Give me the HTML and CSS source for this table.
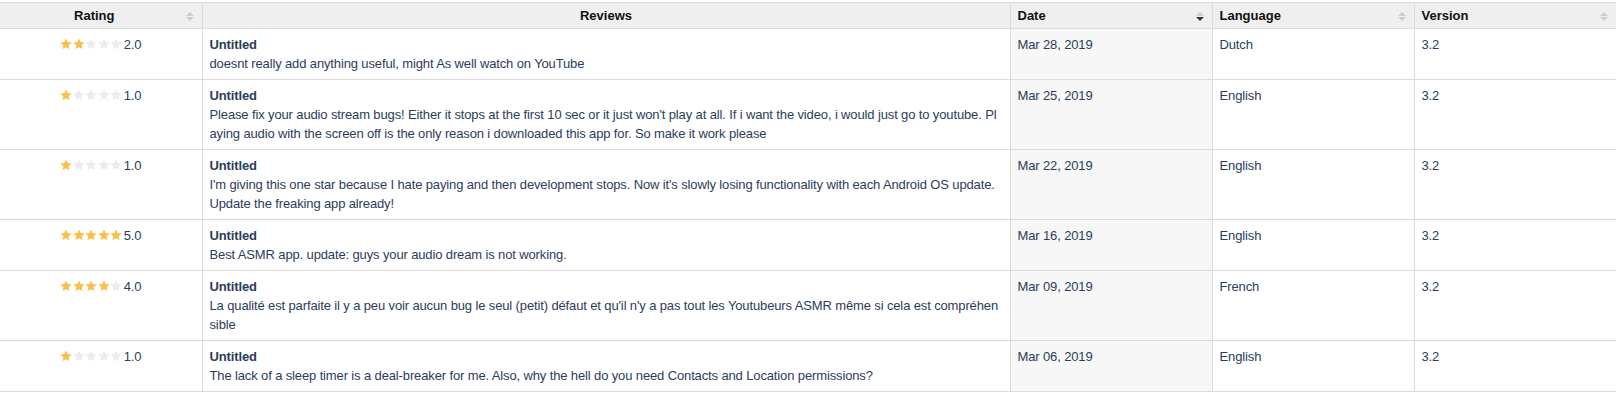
FILE: index.html
```html
<!DOCTYPE html>
<html>
<head>
<meta charset="utf-8">
<link rel="stylesheet" href="styles.css">
</head>
<body>
<svg width="0" height="0" class="defs">
  <defs>
    <path id="star" d="M6 0.4l1.7 3.6 3.9 0.5-2.9 2.7 0.75 3.9L6 9.2 2.55 11.1l0.75-3.9L0.4 4.5l3.9-0.5z"/>
  </defs>
</svg>
<table class="grid">
  <colgroup>
    <col class="c-rating"><col class="c-reviews"><col class="c-date"><col class="c-lang"><col class="c-ver">
  </colgroup>
  <thead>
    <tr>
      <th class="h-center h-sort">Rating<span class="sort"><i class="up"></i><i class="down"></i></span></th>
      <th class="h-center">Reviews</th>
      <th class="h-sort">Date<span class="sort"><i class="up"></i><i class="down on"></i></span></th>
      <th class="h-sort">Language<span class="sort"><i class="up"></i><i class="down"></i></span></th>
      <th class="h-sort">Version<span class="sort"><i class="up"></i><i class="down"></i></span></th>
    </tr>
  </thead>
  <tbody>
    <tr>
      <td class="rating"><span class="stars"><svg class="s on"><use href="#star"/></svg><svg class="s on"><use href="#star"/></svg><svg class="s"><use href="#star"/></svg><svg class="s"><use href="#star"/></svg><svg class="s"><use href="#star"/></svg></span>2.0</td>
      <td class="review"><div class="title">Untitled</div><div class="body">doesnt really add anything useful, might As well watch on YouTube</div></td>
      <td class="date">Mar 28, 2019</td>
      <td>Dutch</td>
      <td>3.2</td>
    </tr>
    <tr>
      <td class="rating"><span class="stars"><svg class="s on"><use href="#star"/></svg><svg class="s"><use href="#star"/></svg><svg class="s"><use href="#star"/></svg><svg class="s"><use href="#star"/></svg><svg class="s"><use href="#star"/></svg></span>1.0</td>
      <td class="review"><div class="title">Untitled</div><div class="body break">Please fix your audio stream bugs! Either it stops at the first 10 sec or it just won't play at all. If i want the video, i would just go to youtube. Playing audio with the screen off is the only reason i downloaded this app for. So make it work please</div></td>
      <td class="date">Mar 25, 2019</td>
      <td>English</td>
      <td>3.2</td>
    </tr>
    <tr>
      <td class="rating"><span class="stars"><svg class="s on"><use href="#star"/></svg><svg class="s"><use href="#star"/></svg><svg class="s"><use href="#star"/></svg><svg class="s"><use href="#star"/></svg><svg class="s"><use href="#star"/></svg></span>1.0</td>
      <td class="review"><div class="title">Untitled</div><div class="body">I'm giving this one star because I hate paying and then development stops. Now it's slowly losing functionality with each Android OS update. Update the freaking app already!</div></td>
      <td class="date">Mar 22, 2019</td>
      <td>English</td>
      <td>3.2</td>
    </tr>
    <tr>
      <td class="rating"><span class="stars"><svg class="s on"><use href="#star"/></svg><svg class="s on"><use href="#star"/></svg><svg class="s on"><use href="#star"/></svg><svg class="s on"><use href="#star"/></svg><svg class="s on"><use href="#star"/></svg></span>5.0</td>
      <td class="review"><div class="title">Untitled</div><div class="body">Best ASMR app. update: guys your audio dream is not working.</div></td>
      <td class="date">Mar 16, 2019</td>
      <td>English</td>
      <td>3.2</td>
    </tr>
    <tr>
      <td class="rating"><span class="stars"><svg class="s on"><use href="#star"/></svg><svg class="s on"><use href="#star"/></svg><svg class="s on"><use href="#star"/></svg><svg class="s on"><use href="#star"/></svg><svg class="s"><use href="#star"/></svg></span>4.0</td>
      <td class="review"><div class="title">Untitled</div><div class="body break">La qualité est parfaite il y a peu voir aucun bug le seul (petit) défaut et qu'il n'y a pas tout les Youtubeurs ASMR même si cela est compréhensible</div></td>
      <td class="date">Mar 09, 2019</td>
      <td>French</td>
      <td>3.2</td>
    </tr>
    <tr>
      <td class="rating"><span class="stars"><svg class="s on"><use href="#star"/></svg><svg class="s"><use href="#star"/></svg><svg class="s"><use href="#star"/></svg><svg class="s"><use href="#star"/></svg><svg class="s"><use href="#star"/></svg></span>1.0</td>
      <td class="review"><div class="title">Untitled</div><div class="body">The lack of a sleep timer is a deal-breaker for me. Also, why the hell do you need Contacts and Location permissions?</div></td>
      <td class="date">Mar 06, 2019</td>
      <td>English</td>
      <td>3.2</td>
    </tr>
  </tbody>
</table>
</body>
</html>
```

FILE: styles.css
```css
html, body {
  margin: 0;
  padding: 0;
  background: #fff;
}
body {
  padding-top: 2px;
  font-family: "Liberation Sans", Arial, sans-serif;
  font-size: 13px;
  color: #2c3d59;
}
.defs {
  position: absolute;
  width: 0;
  height: 0;
}
.grid {
  width: 1616px;
  border-collapse: collapse;
  table-layout: fixed;
}
.c-rating { width: 202px; }
.c-reviews { width: 808px; }
.c-date, .c-lang { width: 202px; }
.c-ver { width: 202px; }

.grid th {
  background: #efefef;
  color: #111;
  font-weight: bold;
  font-size: 13px;
  height: 25px;
  padding: 0 7px;
  text-align: left;
  border-top: 1px solid #dcdcdc;
  border-bottom: 1px solid #dcdcdc;
  border-left: 1px solid #dcdcdc;
  position: relative;
  line-height: 25px;
}
.grid th:first-child, .grid td:first-child { border-left: none; }
.grid th.h-sort { padding-right: 20px; }
.grid th.h-center { text-align: center; }
.sort {
  position: absolute;
  right: 8px;
  top: 9px;
  display: flex;
  flex-direction: column;
  gap: 1px;
}
.sort i {
  display: block;
  width: 0;
  height: 0;
  border-left: 4px solid transparent;
  border-right: 4px solid transparent;
}
.sort .up { border-bottom: 4px solid #cdcdcd; }
.sort .down { border-top: 4px solid #cdcdcd; }
.sort .down.on { border-top-color: #333; }

.grid td {
  vertical-align: top;
  padding: 6px 7px;
  line-height: 19px;
  letter-spacing: -0.13px;
  border-bottom: 1px solid #dcdcdc;
  border-left: 1px solid #dcdcdc;
}
.grid td.rating { text-align: center; }
.stars {
  display: inline-flex;
  vertical-align: -1px;
  margin-right: 1px;
}
.s {
  width: 12.5px;
  height: 12px;
  fill: #ececec;
}
.s.on { fill: #f7c24c; }
.grid td.date { background: #f7f7f7; }
.title { font-weight: bold; }
.body.break { word-break: break-all; }
```
